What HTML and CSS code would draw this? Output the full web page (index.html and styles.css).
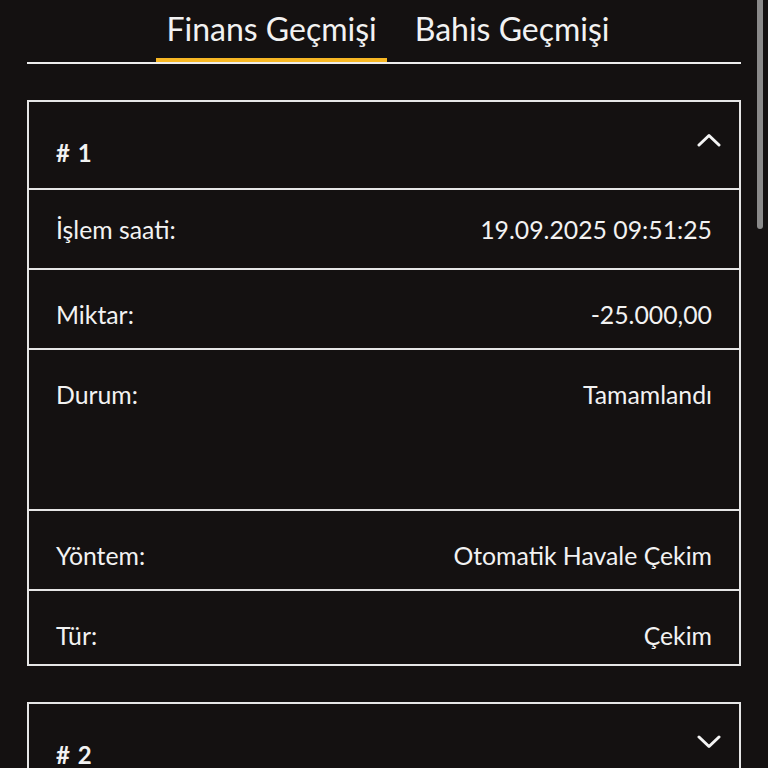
FILE: index.html
```html
<!DOCTYPE html>
<html lang="tr">
<head>
<meta charset="utf-8">
<title>Finans Geçmişi</title>
<link rel="stylesheet" href="styles.css">
</head>
<body>
<div class="page">
  <nav class="tabs">
    <div class="tab active">Finans Geçmişi</div>
    <div class="tab">Bahis Geçmişi</div>
  </nav>

  <section class="card">
    <div class="card-head">
      <div class="card-title"># 1</div>
      <svg class="chev" width="24" height="14" viewBox="0 0 24 14"><polyline points="2,12 12,2.5 22,12" fill="none" stroke="#f4f4f4" stroke-width="3" stroke-linecap="round" stroke-linejoin="round"/></svg>
    </div>
    <div class="row"><span>İşlem saati:</span><span>19.09.2025 09:51:25</span></div>
    <div class="row"><span>Miktar:</span><span>-25.000,00</span></div>
    <div class="row tall"><span>Durum:</span><span>Tamamlandı</span></div>
    <div class="row"><span>Yöntem:</span><span>Otomatik Havale Çekim</span></div>
    <div class="row last"><span>Tür:</span><span>Çekim</span></div>
  </section>

  <section class="card">
    <div class="card-head">
      <div class="card-title"># 2</div>
      <svg class="chev" width="24" height="14" viewBox="0 0 24 14"><polyline points="2,2 12,11.5 22,2" fill="none" stroke="#f4f4f4" stroke-width="3" stroke-linecap="round" stroke-linejoin="round"/></svg>
    </div>
  </section>
</div>
<div class="scrollbar"></div>
</body>
</html>
```

FILE: styles.css
```css
html, body {
  margin: 0;
  padding: 0;
  background: #141111;
  color: #f2f2f2;
  font-family: Lato, "Noto Sans", sans-serif;
}

.page {
  padding: 0 27px;
}

.tabs {
  display: flex;
  justify-content: center;
  gap: 18px;
  border-bottom: 2px solid #ededed;
  padding-left: 8px;
}

.tab {
  font-size: 32px;
  line-height: 36px;
  padding: 11px 10px 11px;
  border-bottom: 4px solid transparent;
  white-space: nowrap;
}

.tab.active {
  border-bottom-color: #f7b724;
}

.card {
  margin-top: 36px;
  border: 2px solid #e6e6e6;
}

.card-head {
  display: flex;
  justify-content: space-between;
  align-items: flex-start;
  box-sizing: border-box;
  height: 88px;
  padding: 31px 18px 0 27px;
  border-bottom: 2px solid #e6e6e6;
}

.card:last-child .card-head {
  border-bottom: 0;
}

.card-title {
  margin-top: 6px;
  font-size: 24px;
  font-weight: 700;
  line-height: 28px;
  word-spacing: 2px;
}

.chev {
  display: block;
}

.row {
  display: flex;
  justify-content: space-between;
  align-items: flex-start;
  box-sizing: border-box;
  height: 80px;
  padding: 30px 27px 0;
  font-size: 24.8px;
  line-height: 30px;
  border-bottom: 2px solid #e6e6e6;
}

.row:nth-child(2) {
  padding-top: 25px;
}

.row.tall {
  height: 161px;
}

.row.last {
  height: 73px;
  border-bottom: 0;
}

.scrollbar {
  position: fixed;
  top: 0;
  right: 5px;
  width: 6px;
  height: 229px;
  border-radius: 0 0 3px 3px;
  background: #8a8a8a;
}
```
